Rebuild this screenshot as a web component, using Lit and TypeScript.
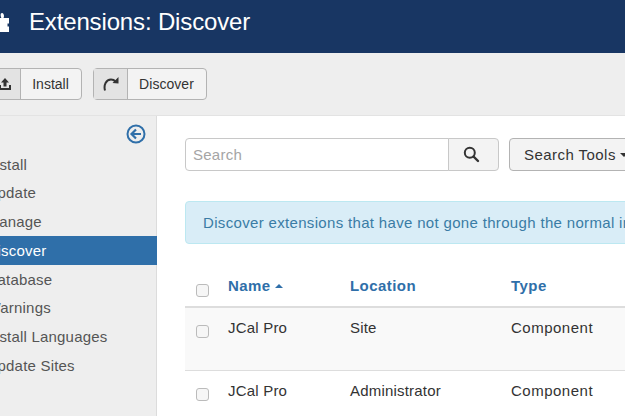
import { LitElement, html, css, svg } from "lit";
import { customElement } from "lit/decorators.js";

const navItems = ["Install", "Update", "Manage", "Discover", "Database", "Warnings", "Install Languages", "Update Sites"];
const rows = [
  { name: "JCal Pro", location: "Site", type: "Component", odd: true },
  { name: "JCal Pro", location: "Administrator", type: "Component", odd: false },
];

@customElement("app-root")
export class AppRoot extends LitElement {
  static styles = css`
    :host { display: block; width: 625px; height: 416px; overflow: hidden; background: #fff; font-family: "Liberation Sans", Arial, sans-serif; color: #333; }
    .header { height: 53px; background: #183663; display: flex; align-items: flex-start; color: #fff; }
    .puzzle { width: 20px; height: 20px; margin: 13px 18px 0 -9px; flex: none; }
    .title { font-size: 24px; line-height: 28px; margin-top: 8px; white-space: nowrap; letter-spacing: -0.15px; }
    .toolbar { height: 63px; box-sizing: border-box; background: #eee; border-bottom: 1px solid #e3e3e3; display: flex; align-items: flex-start; padding: 15px 0 0 0; gap: 11px; }
    .tbtn { display: flex; height: 32px; box-sizing: border-box; border: 1px solid #b3b3b3; border-radius: 4px; background: #f3f3f3; font-size: 14px; color: #333; }
    .tbtn .ico { display: flex; align-items: center; justify-content: center; background: #e3e3e3; border-right: 1px solid #b3b3b3; flex: none; box-sizing: border-box; }
    .tbtn .lab { display: flex; align-items: center; justify-content: center; flex: 1; }
    .b1 { margin-left: -30px; width: 112px; }
    .b1 .ico { width: 50px; padding-left: 18px; }
    .b1 .lab { padding-right: 1px; }
    .b2 { width: 114px; }
    .b2 .ico { width: 34px; }
    .b2 .lab { letter-spacing: 0.05px; padding-right: 1px; }
    .main { display: flex; height: 300px; }
    .side { width: 157px; flex: none; box-sizing: border-box; background: #eee; border-right: 1px solid #dcdcdc; }
    .toggle { display: flex; justify-content: flex-end; padding: 8px 10px 0 0; height: 33.500px; box-sizing: border-box; }
    .nav { list-style: none; margin: 0; padding: 0; }
    .nav li { height: 28.800px; line-height: 29px; font-size: 15px; letter-spacing: 0.2px; color: #555; white-space: nowrap; text-indent: -13.500px; overflow: hidden; }
    .nav li.active { background: #2f6fa9; color: #fff; margin-right: -1px; }
    .content { flex: 1; min-width: 0; padding: 22px 0 0 28px; overflow: hidden; }
    .tools { display: flex; height: 33px; }
    .search { width: 264px; flex: none; box-sizing: border-box; border: 1px solid #c8c8c8; border-radius: 4px 0 0 4px; font-size: 15px; color: #a5a5a5; display: flex; align-items: center; padding-left: 7px; letter-spacing: 0.25px; }
    .sbtn { width: 51px; flex: none; margin-left: -1px; box-sizing: border-box; border: 1px solid #c8c8c8; border-radius: 0 4px 4px 0; background: #f3f3f3; display: flex; align-items: center; justify-content: center; padding-right: 5px; }
    .stools { margin-left: 10px; width: 140px; flex: none; box-sizing: border-box; border: 1px solid #b3b3b3; border-radius: 4px; background: #f3f3f3; font-size: 15px; letter-spacing: 0.45px; color: #333; display: flex; align-items: center; padding-left: 14px; white-space: nowrap; }
    .caret { width: 0; height: 0; border-left: 4px solid transparent; border-right: 4px solid transparent; border-top: 4px solid #333; flex: none; margin-left: 4px; }
    .alert { margin-top: 30px; height: 43px; box-sizing: border-box; width: 640px; background: #d9edf7; border: 1px solid #bce8f1; border-radius: 4px; color: #3a7ca5; font-size: 15px; display: flex; align-items: center; padding-left: 17px; white-space: nowrap; letter-spacing: 0.33px; }
    table { border-collapse: collapse; table-layout: fixed; width: 640px; margin-top: 21px; font-size: 15px; letter-spacing: 0.2px; }
    th { height: 41px; padding: 0; text-align: left; color: #2f6fa9; font-size: 15px; font-weight: bold; letter-spacing: 0.45px; border-bottom: 2px solid #ddd; }
    td { padding: 11px 0 0; height: 63px; box-sizing: border-box; vertical-align: top; border-bottom: 1px solid #ddd; }
    td.type { letter-spacing: 0.5px; }
    tr.odd td { background: #f9f9f9; }
    .c0 { width: 43px; } .c1 { width: 122px; } .c2 { width: 161px; }
    .check { display: block; width: 13px; height: 13px; box-sizing: border-box; border: 1px solid #bbb; border-radius: 3px; margin-left: 11px; background: #f6f6f6; }
    td .check { margin-top: 6px; }
    th .check { margin-top: 10px; }
    .sort { display: inline-block; width: 0; height: 0; border-left: 4.500px solid transparent; border-right: 4.500px solid transparent; border-bottom: 4.500px solid #2f6fa9; vertical-align: 3px; }
  `;

  render() {
    return html`
      <div class="header">
        <svg class="puzzle" viewBox="0 0 20 20"><path fill="#fff" d="M0 5h10.500C9.500 3.500 9 0 11 0s2.500 3.500 1.500 5H18v5.500h-1.500v3H18V19H0z"/></svg>
        <div class="title">Extensions: Discover</div>
      </div>
      <div class="toolbar">
        <div class="tbtn b1">
          <span class="ico"><svg width="14" height="12" viewBox="0 0 14 12"><path fill="#333" d="M7 0l4 4.500H8.500v4h-3v-4H3zM1 7h2v3h8V7h2v5H1z"/></svg></span>
          <span class="lab">Install</span>
        </div>
        <div class="tbtn b2">
          <span class="ico"><svg width="16" height="14" viewBox="0 0 16 14"><path fill="none" stroke="#333" stroke-width="2" d="M2 13.500C.5 8 3 2.500 8 2.500c2 0 3.500.8 4.500 2"/><path fill="#333" d="M15.500 0v6.500L9.500 6z"/></svg></span>
          <span class="lab">Discover</span>
        </div>
      </div>
      <div class="main">
        <div class="side">
          <div class="toggle">
            <svg width="20" height="20" viewBox="0 0 20 20"><circle cx="10" cy="10" r="8.500" fill="none" stroke="#2f6fa9" stroke-width="2"/><path fill="none" stroke="#2f6fa9" stroke-width="2.200" d="M15 10H6M10 5.500L5.500 10l4.500 4.500"/></svg>
          </div>
          <ul class="nav">
            ${navItems.map((n) => html`<li class=${n === "Discover" ? "active" : ""}>${n}</li>`)}
          </ul>
        </div>
        <div class="content">
          <div class="tools">
            <div class="search">Search</div>
            <div class="sbtn"><svg width="17" height="17" viewBox="0 0 17 17">${svg`<circle cx="6.800" cy="6.800" r="5" fill="none" stroke="#333" stroke-width="2"/><path stroke="#333" stroke-width="2.400" stroke-linecap="round" d="M10.500 10.500l4.500 4.500"/>`}</svg></div>
            <div class="stools">Search Tools <span class="caret"></span></div>
          </div>
          <div class="alert">Discover extensions that have not gone through the normal installation process.</div>
          <table>
            <thead>
              <tr>
                <th class="c0"><span class="check"></span></th>
                <th class="c1">Name <span class="sort"></span></th>
                <th class="c2">Location</th>
                <th>Type</th>
              </tr>
            </thead>
            <tbody>
              ${rows.map((r) => html`
                <tr class=${r.odd ? "odd" : ""}>
                  <td><span class="check"></span></td>
                  <td>${r.name}</td>
                  <td>${r.location}</td>
                  <td class="type">${r.type}</td>
                </tr>`)}
            </tbody>
          </table>
        </div>
      </div>
    `;
  }
}
